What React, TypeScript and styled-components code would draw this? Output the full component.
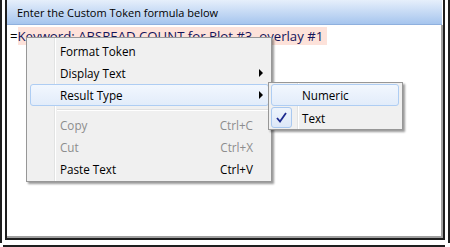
import React from 'react';
import styled, { createGlobalStyle, css } from 'styled-components';

const Global = createGlobalStyle`
  html, body { margin: 0; padding: 0; background: #fff; }
  body { font-family: "Open Sans", "Noto Sans", sans-serif; }
`;

const Page = styled.div`
  position: relative;
  width: 450px;
  height: 247px;
  overflow: hidden;
  background: #fff;
`;

const Frame = styled.div`
  box-sizing: border-box;
  width: 450px;
  height: 243px;
  border-left: 2px solid #1e1e1e;
  border-right: 2px solid #1e1e1e;
  padding: 0 3px 3px 3px;
  display: flex;
`;

const BottomRule = styled.div`
  margin: 2px 0 0 3px;
  width: 442px;
  height: 2px;
  background: #1e1e1e;
`;

const Panel = styled.div`
  flex: 1;
  box-sizing: border-box;
  border-left: 2px solid #1e1e1e;
  border-right: 2px solid #1e1e1e;
  border-bottom: 2px solid #1e1e1e;
  display: flex;
  flex-direction: column;
`;

const TitleBar = styled.div`
  box-sizing: border-box;
  height: 25px;
  margin-right: 1px;
  padding-left: 10px;
  display: flex;
  align-items: center;
  background: linear-gradient(#e6effb, #a6c5ee);
  border-bottom: 1px solid #8fb0de;
  font-size: 11px;
  color: #000;
`;

const TextArea = styled.div`
  flex: 1;
  box-sizing: border-box;
  border-right: 2px solid #a0a0a0;
  border-bottom: 2px solid #a0a0a0;
  padding: 3px 0 0 3px;
`;

const FormulaLine = styled.div`
  font-size: 13.2px;
  line-height: 16px;
  color: #000;
  white-space: nowrap;
`;

const Mark = styled.span`
  background: #fde2da;
  color: #14145a;
  padding-right: 4px;
`;

const Menu = styled.div<{ $left: number; $top: number; $width: number; $gutter: number }>`
  position: absolute;
  left: ${p => p.$left}px;
  top: ${p => p.$top}px;
  width: ${p => p.$width}px;
  box-sizing: border-box;
  border: 1px solid #979797;
  background:
    linear-gradient(to right,
      transparent ${p => p.$gutter}px,
      #e2e3e3 ${p => p.$gutter}px, #e2e3e3 ${p => p.$gutter + 1}px,
      #ffffff ${p => p.$gutter + 1}px, #ffffff ${p => p.$gutter + 2}px,
      transparent ${p => p.$gutter + 2}px),
    #f0f0f0;
  box-shadow: 2px 2px 2px rgba(0, 0, 0, 0.4);
  font-size: 11.7px;
  color: #000;
`;

const MainMenu = styled(Menu)`
  padding: 2px 2px 1px 3px;
`;

const SubMenu = styled(Menu)`
  padding: 1px 3px 1px 2px;
`;

const Item = styled.div<{ $disabled?: boolean; $active?: boolean }>`
  box-sizing: border-box;
  height: 22px;
  display: grid;
  grid-template-columns: 29px 1fr auto 15px;
  align-items: center;
  border: 1px solid transparent;
  border-radius: 3px;
  color: ${p => (p.$disabled ? '#8d8d8d' : '#000')};
  ${p =>
    p.$active &&
    css`
      border-color: #aecdf3;
      background: linear-gradient(#f2f7fe, #e2ecfa);
    `}
`;

const SubItem = styled(Item)`
  grid-template-columns: 30px 1fr;
`;

const Label = styled.span`
  grid-column: 2;
`;

const Shortcut = styled.span`
  grid-column: 3;
`;

const Arrow = styled.span`
  grid-column: 4;
  justify-self: center;
  width: 0;
  height: 0;
  border-left: 4px solid #000;
  border-top: 4px solid transparent;
  border-bottom: 4px solid transparent;
`;

const Separator = styled.div`
  height: 8px;
  display: flex;
  align-items: center;
  padding-left: 27px;
  &::after {
    content: '';
    flex: 1;
    height: 1px;
    background: #e0e0e0;
    border-bottom: 1px solid #fff;
  }
`;

const CheckBox = styled.span`
  grid-column: 1;
  box-sizing: border-box;
  margin-left: -1px;
  width: 21px;
  height: 21px;
  border: 1px solid #a9c8ef;
  border-radius: 3px;
  background: linear-gradient(#eef4fc, #dde8f8);
  display: flex;
  align-items: center;
  justify-content: center;
`;

export default function App() {
  return (
    <Page>
      <Global />
      <Frame>
        <Panel>
          <TitleBar>Enter the Custom Token formula below</TitleBar>
          <TextArea>
            <FormulaLine>
              =<Mark>Keyword: ABSREAD COUNT for Plot #3, overlay #1</Mark>
            </FormulaLine>
          </TextArea>
        </Panel>
      </Frame>
      <BottomRule />

      <MainMenu $left={26} $top={37} $width={246} $gutter={27}>
        <Item>
          <Label>Format Token</Label>
        </Item>
        <Item>
          <Label>Display Text</Label>
          <Arrow />
        </Item>
        <Item $active>
          <Label>Result Type</Label>
          <Arrow />
        </Item>
        <Separator />
        <Item $disabled>
          <Label>Copy</Label>
          <Shortcut>Ctrl+C</Shortcut>
        </Item>
        <Item $disabled>
          <Label>Cut</Label>
          <Shortcut>Ctrl+X</Shortcut>
        </Item>
        <Item>
          <Label>Paste Text</Label>
          <Shortcut>Ctrl+V</Shortcut>
        </Item>
      </MainMenu>

      <SubMenu $left={268} $top={82} $width={135} $gutter={28}>
        <SubItem $active>
          <Label>Numeric</Label>
        </SubItem>
        <SubItem>
          <CheckBox>
            <svg width="11" height="11" viewBox="0 0 11 11">
              <path d="M1 6 L4 9.5 L10 1" fill="none" stroke="#1d2b8f" strokeWidth="1.8" />
            </svg>
          </CheckBox>
          <Label>Text</Label>
        </SubItem>
      </SubMenu>
    </Page>
  );
}
